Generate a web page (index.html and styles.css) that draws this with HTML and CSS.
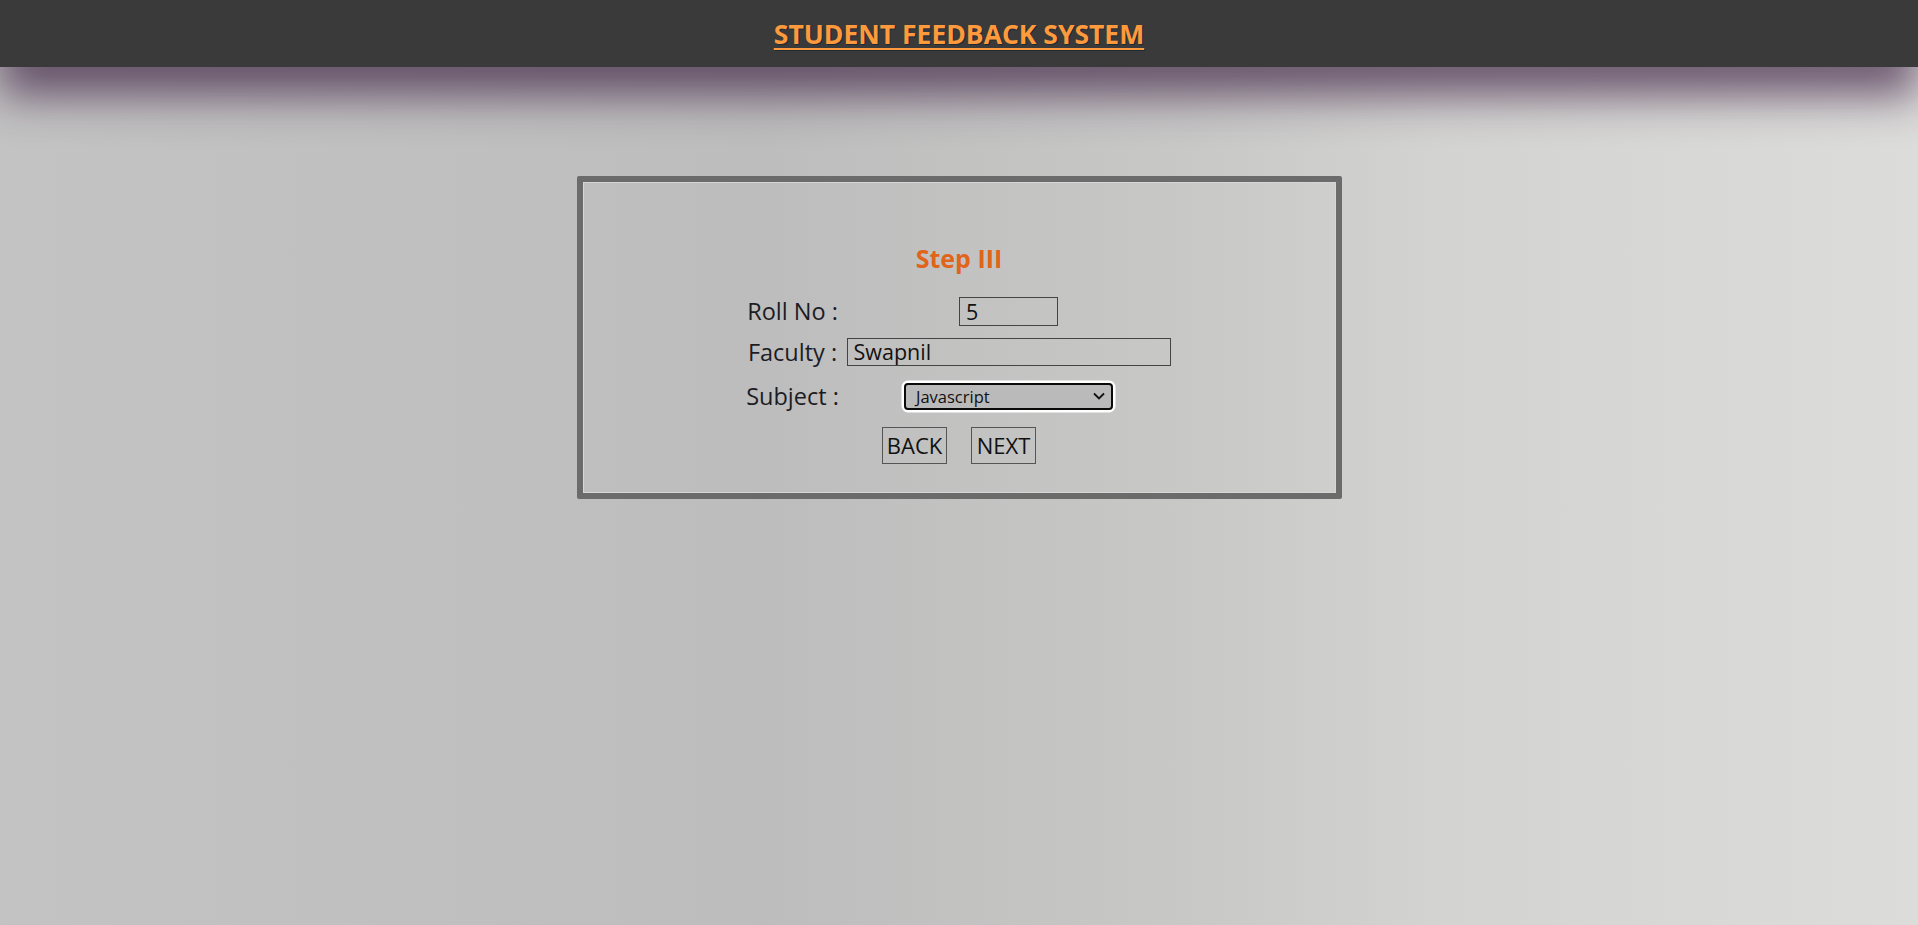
FILE: index.html
```html
<!DOCTYPE html>
<html lang="en">
<head>
<meta charset="utf-8">
<title>Student Feedback System</title>
<link rel="stylesheet" href="styles.css">
</head>
<body>
<header class="topbar">
  <a class="brand" href="#">STUDENT FEEDBACK SYSTEM</a>
</header>
<main class="page">
  <form class="card">
    <h2 class="step">Step III</h2>
    <table class="fields">
      <tr class="row-roll">
        <td class="label">Roll No :</td>
        <td class="value"><input class="box roll" type="text" value="5"></td>
      </tr>
      <tr class="row-faculty">
        <td class="label">Faculty :</td>
        <td class="value"><input class="box faculty" type="text" value="Swapnil"></td>
      </tr>
      <tr class="row-subject">
        <td class="label">Subject :</td>
        <td class="value">
          <div class="select">
            <span class="select-text">Javascript</span>
            <svg class="chev" width="12" height="8" viewBox="0 0 12 8"><path d="M1 1.5 L6 6.5 L11 1.5" fill="none" stroke="#111" stroke-width="1.8"/></svg>
          </div>
        </td>
      </tr>
    </table>
    <div class="actions">
      <button type="button" class="btn">BACK</button>
      <button type="button" class="btn">NEXT</button>
    </div>
  </form>
</main>
</body>
</html>
```
FILE: styles.css
```css
html, body {
  margin: 0;
  height: 100%;
}
body {
  font-family: "Open Sans", "Noto Sans", sans-serif;
  background: linear-gradient(to right, #c3c3c3 0%, #bdbdbd 40%, #c8c8c7 62%, #d3d3d1 75%, #dcdcda 100%);
  color: #111;
  overflow: hidden;
}
.topbar {
  height: 67px;
  background: #3a3a3a;
  display: flex;
  justify-content: center;
  align-items: center;
  box-shadow: 0 28px 44px rgba(60, 30, 65, 0.7);
  position: relative;
  z-index: 1;
}
.brand {
  color: #ff9a3c;
  font-weight: 700;
  font-size: 26.5px;
  line-height: 34px;
  text-decoration: underline;
  text-decoration-thickness: 2px;
  text-underline-offset: 4px;
  text-shadow: 1px 1px 0 #1d2a33;
}
.page {
  display: flex;
  justify-content: center;
  padding-top: 109px;
}
.card {
  width: 753px;
  height: 311px;
  border: 6px solid #6b6b6b;
  border-radius: 2px;
  box-shadow: inset 0 0 0 1px #d6d6d6;
  display: flex;
  flex-direction: column;
  align-items: center;
}
.step {
  margin: 61px 0 18px;
  font-size: 25px;
  font-weight: 700;
  color: #e0641a;
  line-height: 30px;
}
.fields {
  border-collapse: collapse;
  border-spacing: 0;
  margin-left: -5px;
}
.fields td {
  padding: 0;
  text-align: center;
  vertical-align: middle;
}
.row-roll td { height: 40px; }
.row-faculty td { height: 41px; }
.row-subject td { height: 48px; }
.label {
  font-size: 23.5px;
  color: #1c1c24;
  width: 100px;
  padding-right: 4px !important;
  white-space: nowrap;
}
.value {
  width: 324px;
}
.box {
  font-family: inherit;
  font-size: 21.5px;
  color: #111;
  background: transparent;
  border: 1px solid #444;
  box-sizing: border-box;
  padding: 0 6px;
  margin: 0;
  outline: none;
  vertical-align: middle;
}
.roll {
  width: 99px;
  height: 29px;
}
.faculty {
  width: 324px;
  height: 28px;
}
.select {
  display: inline-flex;
  align-items: center;
  justify-content: space-between;
  box-sizing: border-box;
  width: 209px;
  height: 27px;
  border: 2px solid #0a0a0a;
  border-radius: 4px;
  box-shadow: 0 0 0 2.5px #ffffff;
  background: #bababa;
  padding: 0 6px 0 10px;
  vertical-align: middle;
}
.select-text {
  font-size: 16.5px;
  color: #111;
}
.actions {
  display: flex;
  gap: 24px;
  margin-top: 7px;
}
.btn {
  font-family: inherit;
  font-size: 22px;
  color: #111;
  background: transparent;
  border: 1px solid #555;
  height: 37px;
  width: 65px;
  padding: 0;
  margin: 0;
  line-height: 35px;
}
```
